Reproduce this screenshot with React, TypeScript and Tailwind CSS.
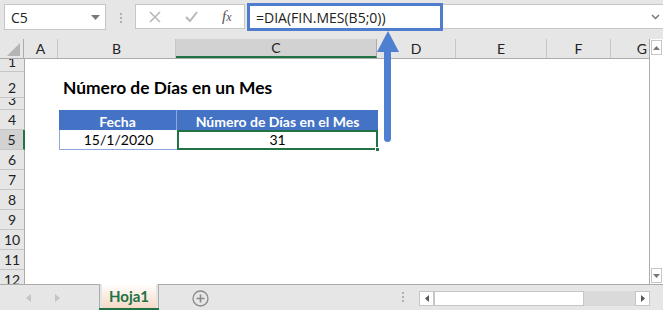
import React from 'react';

const cols = [
  { id: 'A', w: 34 },
  { id: 'B', w: 118 },
  { id: 'C', w: 201 },
  { id: 'D', w: 79 },
  { id: 'E', w: 91 },
  { id: 'F', w: 64 },
  { id: 'G', w: 38 },
];

const rows = [
  { n: 1, h: 13 },
  { n: 2, h: 26 },
  { n: 3, h: 12 },
  { n: 4, h: 20 },
  { n: 5, h: 20 },
  { n: 6, h: 20 },
  { n: 7, h: 20 },
  { n: 8, h: 20 },
  { n: 9, h: 20 },
  { n: 10, h: 20 },
  { n: 11, h: 20 },
  { n: 12, h: 20 },
];

const font = { fontFamily: 'Lato, "Open Sans", sans-serif' };

const Cell: React.FC<{ row: number; col: string }> = ({ row, col }) => {
  if (row === 2 && col === 'B') {
    return (
      <div className="relative h-full">
        <span className="absolute left-[4px] bottom-[2px] whitespace-nowrap text-[17.4px] font-bold text-black leading-none">
          Número de Días en un Mes
        </span>
      </div>
    );
  }
  if (row === 4 && col === 'B') {
    return (
      <div className="h-full bg-[#4472c4] border-r border-[#8eaadb] flex items-end justify-center pb-[1px] text-white font-bold text-[14px] leading-none">
        Fecha
      </div>
    );
  }
  if (row === 4 && col === 'C') {
    return (
      <div className="h-full bg-[#4472c4] flex items-end justify-center pb-[1px] text-white font-bold text-[14px] leading-none whitespace-nowrap">
        Número de Días en el Mes
      </div>
    );
  }
  if (row === 5 && col === 'B') {
    return (
      <div className="h-full border-b border-l border-[#8eaadb] flex items-end justify-center pb-[2px] text-black text-[14px] leading-none">
        15/1/2020
      </div>
    );
  }
  if (row === 5 && col === 'C') {
    return (
      <div className="relative h-full border-2 border-[#217346] flex items-end justify-center pb-[1px] text-black text-[14px] leading-none">
        31
        <span className="absolute right-[-4px] bottom-[-4px] w-[5px] h-[5px] bg-[#217346] border border-white" />
      </div>
    );
  }
  return <div className="h-full" />;
};

const App: React.FC = () => {
  return (
    <div className="relative w-[663px] h-[310px] overflow-hidden bg-[#e6e6e6] select-none" style={font}>
      {/* Formula bar */}
      <div className="h-[39px] flex items-start pt-[4px]">
        <div className="ml-[4px] w-[102px] h-[26px] bg-white border border-[#c6c6c6] flex items-center justify-between pl-[6px] pr-[5px]">
          <span className="text-[14px] text-[#222]" style={{ fontFamily: '"Open Sans", sans-serif' }}>C5</span>
          <svg width="9" height="5" viewBox="0 0 9 5"><path d="M0 0h9L4.5 5z" fill="#7a7a7a" /></svg>
        </div>
        <div className="ml-[14px] mt-[9px] flex flex-col gap-[2px]">
          <span className="w-[2px] h-[2px] bg-[#b0b0b0]" />
          <span className="w-[2px] h-[2px] bg-[#b0b0b0]" />
          <span className="w-[2px] h-[2px] bg-[#b0b0b0]" />
        </div>
        <div className="ml-[13px] w-[110px] h-[25px] bg-white border border-[#c6c6c6] flex items-center">
          <svg className="ml-[13px]" width="12" height="12" viewBox="0 0 12 12">
            <path d="M1 1l10 10M11 1L1 11" stroke="#b8b8b8" strokeWidth="1.6" />
          </svg>
          <svg className="ml-[24px]" width="13" height="11" viewBox="0 0 13 11">
            <path d="M1 6l4 4 7-9" stroke="#b8b8b8" strokeWidth="2" fill="none" />
          </svg>
          <span className="ml-[24px] italic text-[15px] text-[#555] leading-none" style={{ fontFamily: '"Liberation Serif", serif' }}>
            f<span className="text-[12px]">x</span>
          </span>
        </div>
        <div className="ml-[2px] mt-[-1px] w-[196px] h-[28px] bg-white border-[3px] border-[#4f7ccd] flex items-center pl-[6px]">
          <span className="text-[14px] text-[#222] whitespace-nowrap" style={{ fontFamily: '"Open Sans", sans-serif' }}>=DIA(FIN.MES(B5;0))</span>
        </div>
        <div className="flex-1 h-[25px] bg-white border-y border-[#c6c6c6] flex items-center justify-end pr-[3px]">
          <svg width="9" height="6" viewBox="0 0 9 6"><path d="M1 1l3.5 3.5L8 1" stroke="#777" strokeWidth="1.5" fill="none" /></svg>
        </div>
      </div>

      {/* Grid + vertical scrollbar */}
      <div className="flex h-[245px]">
        <div className="w-[650px] h-full overflow-hidden bg-white border-r border-[#ababab]">
          {/* Column headers */}
          <div className="flex h-[20px] bg-[#e6e6e6] border-b border-[#ababab]">
            <div className="w-[25px] h-full relative border-r border-[#ababab]">
              <svg className="absolute right-[3px] bottom-[2px]" width="13" height="13" viewBox="0 0 13 13">
                <path d="M13 0v13H0z" fill="#b4b4b4" />
              </svg>
            </div>
            {cols.map((c) => (
              <div
                key={c.id}
                style={{ width: c.w }}
                className={`h-full flex items-center justify-center text-[14px] text-[#222] shrink-0 ${
                  c.id === 'C' ? 'bg-[#d2d2d2] border-b-2 border-[#217346] -mb-[1px] border-r border-r-[#ababab]' : 'border-r border-[#c6c6c6]'
                } ${c.id === 'G' ? 'justify-end pr-[2px] border-r-0' : ''}`}
              >
                {c.id}
              </div>
            ))}
          </div>
          {/* Rows */}
          {rows.map((r) => (
            <div key={r.n} className="flex" style={{ height: r.h }}>
              <div
                className={`w-[25px] shrink-0 h-full overflow-hidden flex items-end justify-center text-[14px] leading-[17px] text-[#222] border-b border-[#c6c6c6] ${
                  r.n === 5 ? 'bg-[#d2d2d2] border-r-2 border-r-[#217346]' : 'bg-[#e6e6e6] border-r border-r-[#ababab]'
                }`}
              >
                <span className="pb-[1px]">{r.n}</span>
              </div>
              {cols.map((c) => (
                <div key={c.id} style={{ width: c.w }} className="h-full shrink-0">
                  <Cell row={r.n} col={c.id} />
                </div>
              ))}
            </div>
          ))}
        </div>
        <div className="flex-1 h-full bg-white flex flex-col justify-between">
          <div className="h-[15px] mt-[1px] mx-[1px] border border-[#c6c6c6] flex items-center justify-center">
            <svg width="7" height="4" viewBox="0 0 7 4"><path d="M0 4h7L3.5 0z" fill="#777" /></svg>
          </div>
          <div className="h-[15px] mb-[1px] mx-[1px] border border-[#c6c6c6] flex items-center justify-center">
            <svg width="7" height="4" viewBox="0 0 7 4"><path d="M0 0h7L3.5 4z" fill="#777" /></svg>
          </div>
        </div>
      </div>

      {/* Sheet tabs bar */}
      <div className="relative h-[26px] border-t border-[#ababab] flex items-start">
        <svg className="ml-[26px] mt-[9px]" width="5" height="8" viewBox="0 0 5 8"><path d="M5 0v8L0 4z" fill="#c4c4c4" /></svg>
        <svg className="ml-[24px] mt-[9px]" width="5" height="8" viewBox="0 0 5 8"><path d="M0 0v8l5-4z" fill="#c4c4c4" /></svg>
        <div className="ml-[39px] -mt-[1px] w-[60px] h-[26px] border-x border-[#ababab] bg-[#e6e6e6] flex flex-col">
          <div className="flex-1 mx-[2px] bg-gradient-to-b from-white to-[#f6d9c6] flex items-center justify-center text-[15px] font-bold text-[#217346] leading-none">
            Hoja1
          </div>
          <div className="h-[2px] -mx-[1px] bg-[#217346]" />
        </div>
        <svg className="ml-[33px] mt-[5px]" width="17" height="17" viewBox="0 0 17 17">
          <circle cx="8.5" cy="8.5" r="7.5" fill="none" stroke="#8a8a8a" strokeWidth="1.3" />
          <path d="M8.5 4.5v8M4.5 8.5h8" stroke="#8a8a8a" strokeWidth="1.6" />
        </svg>
        <div className="ml-[193px] mt-[7px] flex flex-col gap-[2px]">
          <span className="w-[2px] h-[2px] bg-[#b0b0b0]" />
          <span className="w-[2px] h-[2px] bg-[#b0b0b0]" />
          <span className="w-[2px] h-[2px] bg-[#b0b0b0]" />
        </div>
        <div className="ml-[15px] mt-[6px] flex h-[15px] w-[231px] bg-[#dadada]">
          <div className="w-[15px] h-full bg-white border border-[#c6c6c6] flex items-center justify-center">
            <svg width="4" height="7" viewBox="0 0 4 7"><path d="M4 0v7L0 3.5z" fill="#555" /></svg>
          </div>
          <div className="w-[150px] h-full bg-white border border-[#c6c6c6]" />
          <div className="flex-1" />
          <div className="w-[15px] h-full bg-white border border-[#c6c6c6] flex items-center justify-center">
            <svg width="4" height="7" viewBox="0 0 4 7"><path d="M0 0v7l4-3.5z" fill="#555" /></svg>
          </div>
        </div>
      </div>

      {/* Annotation arrow */}
      <svg className="absolute left-[376px] top-[31px]" width="24" height="112" viewBox="0 0 24 112">
        <path d="M12 0L23 21H1z" fill="#4f7fd1" />
        <rect x="8" y="18" width="7" height="93" rx="3.5" fill="#4f7fd1" />
      </svg>
    </div>
  );
};

export default App;
